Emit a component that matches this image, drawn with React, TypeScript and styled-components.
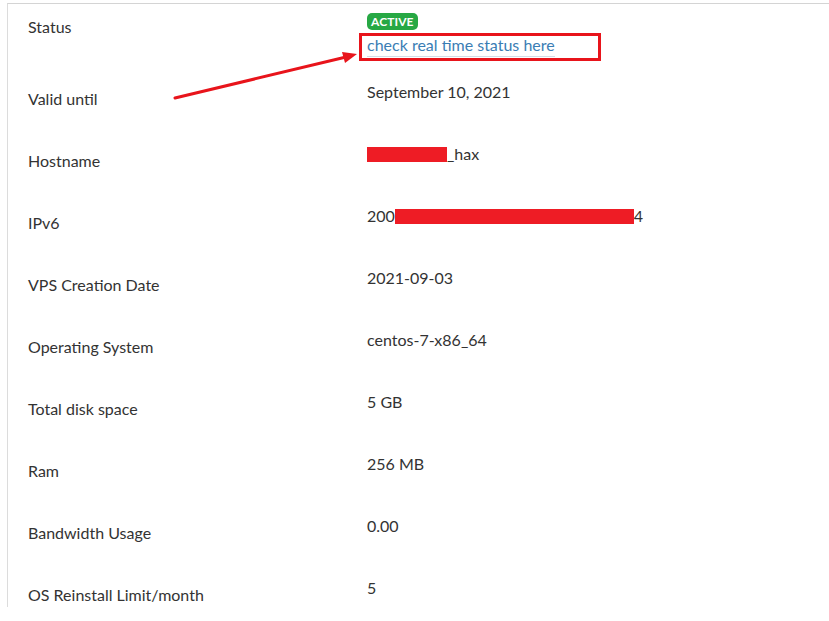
import React from "react";
import styled, { createGlobalStyle } from "styled-components";

const Global = createGlobalStyle`
  html, body { margin: 0; padding: 0; background: #fff; }
  body { font-family: Lato, "Open Sans", sans-serif; color: #333; }
`;

const Page = styled.div`
  position: relative;
  width: 829px;
  height: 621px;
  overflow: hidden;
  padding: 3px 0 0 7px;
  box-sizing: border-box;
`;

const Card = styled.div`
  border-left: 1px solid #dcdcdc;
  border-top: 1px solid #d4d4d4;
  height: 604px;
  overflow: hidden;
  box-sizing: border-box;
  padding-top: 6px;
`;

const Row = styled.div<{ $tall?: boolean }>`
  display: grid;
  grid-template-columns: 339px 1fr;
  padding-left: 20px;
  min-height: ${(p) => (p.$tall ? 72 : 62)}px;
  box-sizing: border-box;
`;

const Label = styled.div`
  margin-top: 7px;
  font-size: 16px;
  line-height: 20px;
  color: #333;
`;

const Value = styled.div`
  font-size: 16px;
  line-height: 20px;
  color: #333;
  display: flex;
  flex-direction: column;
  align-items: flex-start;
`;

const Badge = styled.span`
  margin-top: 3px;
  height: 17px;
  padding: 0 4px;
  border-radius: 5px;
  background: #27a844;
  color: #fff;
  font-weight: 700;
  font-size: 12px;
  line-height: 17px;
  letter-spacing: 0.1px;
`;

const Link = styled.a`
  margin-top: 5px;
  font-size: 16px;
  line-height: 20px;
  color: #3a7db4;
  text-decoration: none;
  padding-bottom: 1px;
  border-bottom: 1px solid #d3dce6;
`;

const Line = styled.span`
  display: inline-flex;
  align-items: center;
  white-space: pre;
`;

const Redact = styled.span<{ $w: number }>`
  display: inline-block;
  width: ${(p) => p.$w}px;
  height: 15px;
  background: #ee1c25;
`;

const Highlight = styled.div`
  position: absolute;
  left: 359px;
  top: 33px;
  width: 242px;
  height: 28px;
  border: 3px solid #e8141b;
  box-sizing: border-box;
  pointer-events: none;
`;

const ArrowSvg = styled.svg`
  position: absolute;
  left: 0;
  top: 0;
  pointer-events: none;
`;

const rows: { label: string; value: React.ReactNode }[] = [
  { label: "Valid until", value: "September 10, 2021" },
  {
    label: "Hostname",
    value: (
      <Line>
        <Redact $w={80} />
        {"_hax"}
      </Line>
    ),
  },
  {
    label: "IPv6",
    value: (
      <Line>
        {"200"}
        <Redact $w={239} />
        {"4"}
      </Line>
    ),
  },
  { label: "VPS Creation Date", value: "2021-09-03" },
  { label: "Operating System", value: "centos-7-x86_64" },
  { label: "Total disk space", value: "5 GB" },
  { label: "Ram", value: "256 MB" },
  { label: "Bandwidth Usage", value: "0.00" },
  { label: "OS Reinstall Limit/month", value: "5" },
];

export default function App() {
  return (
    <>
      <Global />
      <Page>
        <Card>
          <Row $tall>
            <Label>Status</Label>
            <Value>
              <Badge>ACTIVE</Badge>
              <Link href="#">check real time status here</Link>
            </Value>
          </Row>
          {rows.map((r) => (
            <Row key={r.label}>
              <Label>{r.label}</Label>
              <Value>{r.value}</Value>
            </Row>
          ))}
        </Card>
        <Highlight />
        <ArrowSvg width="829" height="621" viewBox="0 0 829 621">
          <line x1="175" y1="98" x2="344" y2="57.5" stroke="#e8141b" strokeWidth="3" strokeLinecap="round" />
          <polygon points="357,54 342,52 345,63" fill="#e8141b" />
        </ArrowSvg>
      </Page>
    </>
  );
}
